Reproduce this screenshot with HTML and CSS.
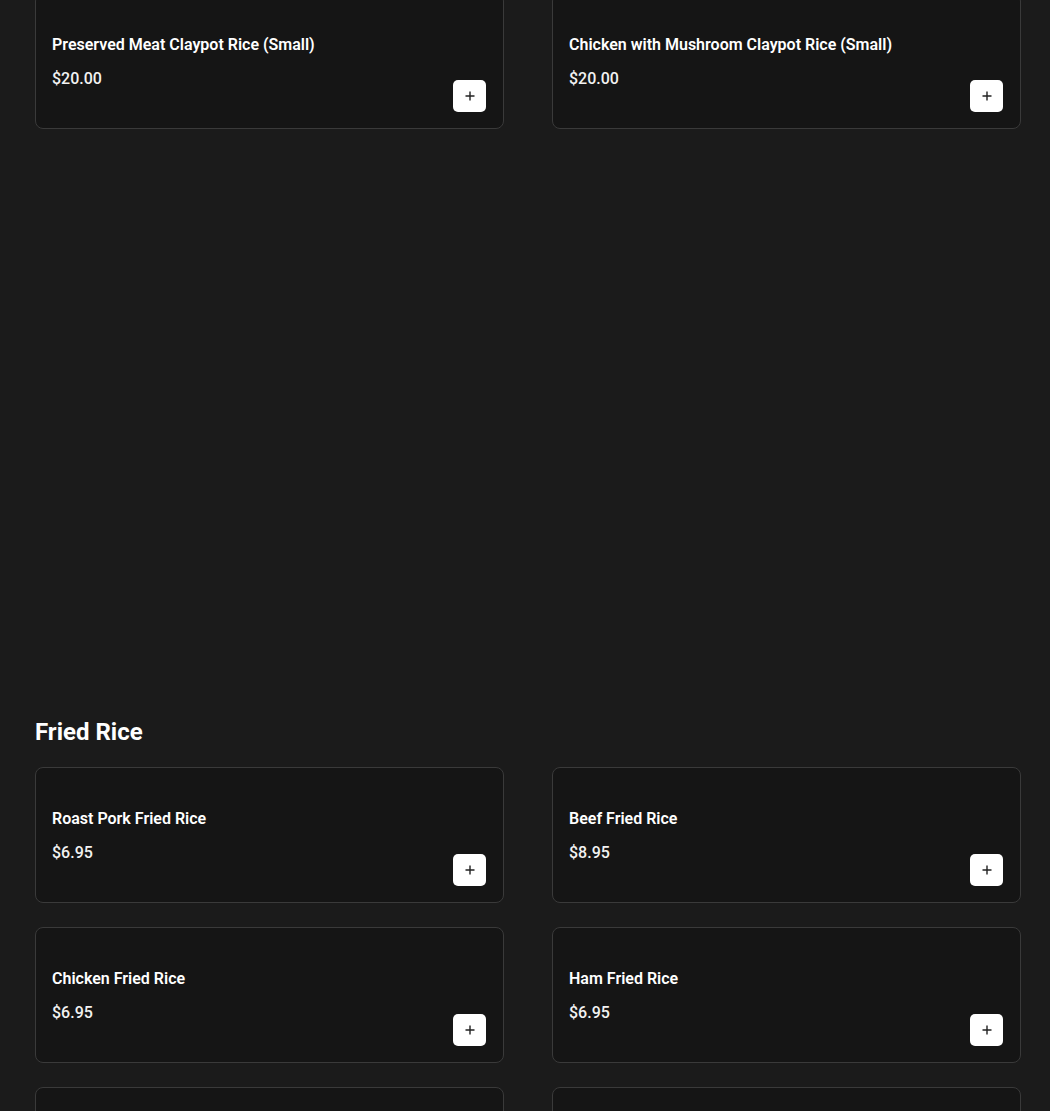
FILE: index.html
```html
<!DOCTYPE html>
<html>
<head>
<meta charset="utf-8">
<link rel="stylesheet" href="styles.css">
</head>
<body>
<main class="menu">
  <section class="section section-top">
    <div class="grid">
      <div class="card">
        <div class="info">
          <div class="name">Preserved Meat Claypot Rice (Small)</div>
          <div class="price">$20.00</div>
        </div>
        <button class="add"><svg viewBox="0 0 12 12" width="12" height="12"><path d="M6 1.5v9M1.5 6h9" stroke="#222" stroke-width="1.4"/></svg></button>
      </div>
      <div class="card">
        <div class="info">
          <div class="name">Chicken with Mushroom Claypot Rice (Small)</div>
          <div class="price">$20.00</div>
        </div>
        <button class="add"><svg viewBox="0 0 12 12" width="12" height="12"><path d="M6 1.5v9M1.5 6h9" stroke="#222" stroke-width="1.4"/></svg></button>
      </div>
    </div>
  </section>
  <section class="section section-fried">
    <h2 class="heading">Fried Rice</h2>
    <div class="grid">
      <div class="card">
        <div class="info">
          <div class="name">Roast Pork Fried Rice</div>
          <div class="price">$6.95</div>
        </div>
        <button class="add"><svg viewBox="0 0 12 12" width="12" height="12"><path d="M6 1.5v9M1.5 6h9" stroke="#222" stroke-width="1.4"/></svg></button>
      </div>
      <div class="card">
        <div class="info">
          <div class="name">Beef Fried Rice</div>
          <div class="price">$8.95</div>
        </div>
        <button class="add"><svg viewBox="0 0 12 12" width="12" height="12"><path d="M6 1.5v9M1.5 6h9" stroke="#222" stroke-width="1.4"/></svg></button>
      </div>
      <div class="card">
        <div class="info">
          <div class="name">Chicken Fried Rice</div>
          <div class="price">$6.95</div>
        </div>
        <button class="add"><svg viewBox="0 0 12 12" width="12" height="12"><path d="M6 1.5v9M1.5 6h9" stroke="#222" stroke-width="1.4"/></svg></button>
      </div>
      <div class="card">
        <div class="info">
          <div class="name">Ham Fried Rice</div>
          <div class="price">$6.95</div>
        </div>
        <button class="add"><svg viewBox="0 0 12 12" width="12" height="12"><path d="M6 1.5v9M1.5 6h9" stroke="#222" stroke-width="1.4"/></svg></button>
      </div>
      <div class="card card-empty"></div>
      <div class="card card-empty"></div>
    </div>
  </section>
</main>
</body>
</html>
```
FILE: styles.css
```css
html, body {
  margin: 0;
  padding: 0;
  background: #1b1b1b;
  overflow: hidden;
}
body {
  font-family: Roboto, "Liberation Sans", Arial, sans-serif;
  color: #ffffff;
}
.menu {
  width: 986px;
  padding-left: 35px;
  margin-top: -7px;
}
.section-fried {
  margin-top: 588px;
}
.heading {
  margin: 0 0 20px 0;
  font-size: 24px;
  line-height: 30px;
  font-weight: 700;
  color: #ffffff;
}
.grid {
  display: grid;
  grid-template-columns: 1fr 1fr;
  column-gap: 48px;
  row-gap: 24px;
}
.card {
  display: flex;
  align-items: flex-end;
  justify-content: space-between;
  background: #151515;
  border: 1px solid #3a3a3a;
  border-radius: 8px;
  padding: 16px 17px 16px 16px;
}
.card-empty {
  height: 102px;
}
.info {
  padding: 25px 0 23px 0;
  display: flex;
  flex-direction: column;
  gap: 14px;
}
.name {
  font-size: 16px;
  line-height: 20px;
  font-weight: 600;
  color: #ffffff;
}
.price {
  font-size: 16px;
  line-height: 20px;
  font-weight: 500;
  color: #f2f2f2;
}
.add {
  width: 33px;
  height: 32px;
  border: none;
  border-radius: 5px;
  background: #ffffff;
  display: flex;
  align-items: center;
  justify-content: center;
  padding: 0;
}
```
